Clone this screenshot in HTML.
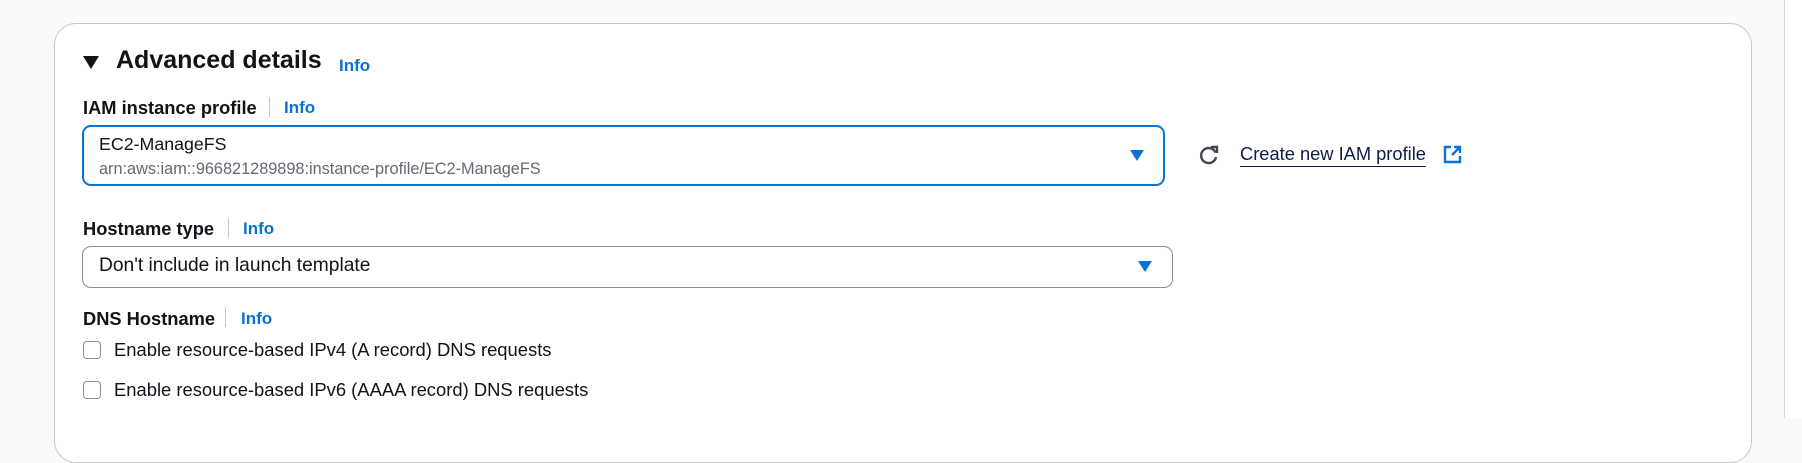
<!DOCTYPE html>
<html><head><meta charset="utf-8"><style>
html,body{margin:0;padding:0;width:1802px;height:418px;overflow:hidden;background:#fafafa;font-family:"Liberation Sans",Arial,sans-serif;color:#0f141a;}
.card{position:absolute;left:54px;top:23px;width:1698px;height:440px;background:#fff;border:1px solid #c6c6cd;border-radius:22px;box-sizing:border-box;}
.abs{position:absolute;white-space:nowrap;}
.info{color:#0972d3;font-weight:bold;font-size:17px;}
.lbl{font-weight:bold;font-size:18.3px;}
.sep{position:absolute;width:1px;background:#c6c6cd;height:20px;}
.sel{position:absolute;box-sizing:border-box;background:#fff;}
.caret{position:absolute;width:0;height:0;border-left:7px solid transparent;border-right:7px solid transparent;border-top:11px solid #0972d3;}
.cb{position:absolute;width:18px;height:18px;border:1.5px solid #8c8c94;border-radius:4px;box-sizing:border-box;background:#fff;}
.t{font-size:18.4px;}
</style></head><body>
<div class="card"></div>
<div style="position:absolute;left:1784px;top:0;width:1px;height:418px;background:#d5d5da"></div>
<div style="position:absolute;left:1785px;top:0;width:17px;height:418px;background:#fff"></div>

<div class="caret" style="left:83px;top:56px;border-left-width:8px;border-right-width:8px;border-top:13px solid #0f141a"></div>
<div class="abs" style="left:116px;top:46px;font-size:25px;font-weight:bold;">Advanced details</div>
<div class="abs info" style="left:339px;top:56px;">Info</div>

<div class="abs lbl" style="left:83px;top:97px;">IAM instance profile</div>
<div class="sep" style="left:269px;top:97px"></div>
<div class="abs info" style="left:284px;top:98px;">Info</div>

<div class="sel" style="left:82px;top:125px;width:1083px;height:61px;border:2px solid #0972d3;border-radius:9px;"></div>
<div class="abs" style="left:99px;top:134px;font-size:17.8px;">EC2-ManageFS</div>
<div class="abs" style="left:99px;top:160px;font-size:16.3px;color:#656871;">arn:aws:iam::966821289898:instance-profile/EC2-ManageFS</div>
<div class="caret" style="left:1130px;top:150px"></div>

<svg class="abs" style="left:1198px;top:144px" width="22" height="22" viewBox="0 0 22 22"><path d="M17.5 8.5 A7.5 7.5 0 1 0 18 13" fill="none" stroke="#424650" stroke-width="2.4"/><path d="M13 3 L19 3 L19 9" fill="none" stroke="#424650" stroke-width="2.4"/></svg>
<div class="abs" style="left:1240px;top:143px;font-size:18.3px;color:#0f1b49;border-bottom:1.5px solid #0f1b49;padding-bottom:1px;">Create new IAM profile</div>
<svg class="abs" style="left:1443px;top:145px" width="19" height="19" viewBox="0 0 19 19"><path d="M8 2 H2 V17 H17 V11" fill="none" stroke="#0972d3" stroke-width="2.4"/><path d="M11 2 H17 V8 M17 2 L9 10" fill="none" stroke="#0972d3" stroke-width="2.4"/></svg>

<div class="abs lbl" style="left:83px;top:218px;">Hostname type</div>
<div class="sep" style="left:228px;top:218px"></div>
<div class="abs info" style="left:243px;top:219px;">Info</div>

<div class="sel" style="left:82px;top:246px;width:1091px;height:42px;border:1px solid #8c8c94;border-radius:9px;"></div>
<div class="abs" style="left:99px;top:255px;font-size:19.2px;">Don't include in launch template</div>
<div class="caret" style="left:1138px;top:261px"></div>

<div class="abs lbl" style="left:83px;top:308px;">DNS Hostname</div>
<div class="sep" style="left:225px;top:307px"></div>
<div class="abs info" style="left:241px;top:309px;">Info</div>

<div class="cb" style="left:83px;top:341px"></div>
<div class="abs t" style="left:114px;top:339px;">Enable resource-based IPv4 (A record) DNS requests</div>
<div class="cb" style="left:83px;top:381px"></div>
<div class="abs t" style="left:114px;top:379px;">Enable resource-based IPv6 (AAAA record) DNS requests</div>
</body></html>
